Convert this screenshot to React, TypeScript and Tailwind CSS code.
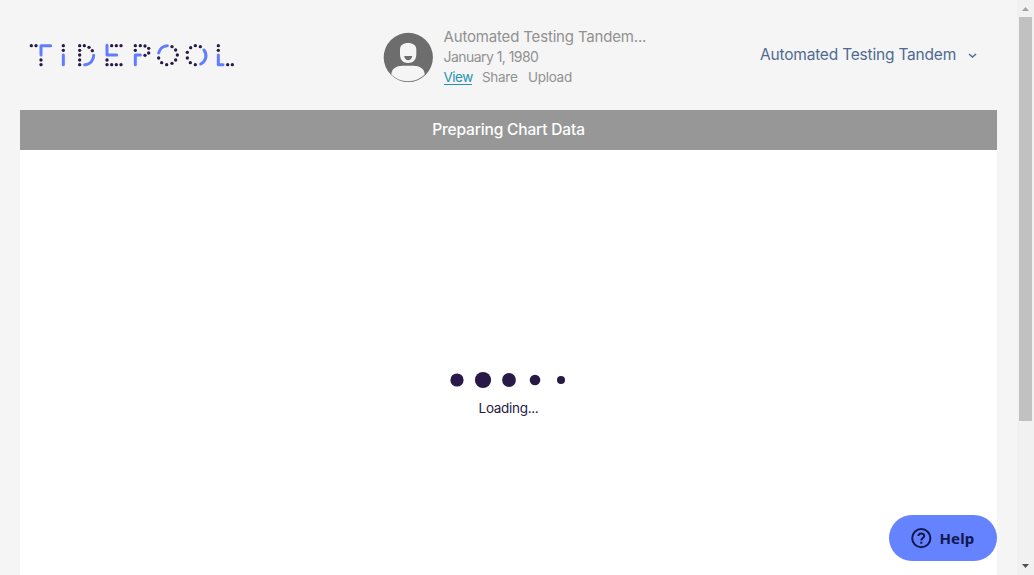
import React from "react";

type Point = [number, number];

const leftDots: Point[] = [
  [34, 47], [48, 47], [63, 90], [63, 104],
  [130, 47], [130, 61],
  [179, 47], [193, 47], [207, 52], [217, 62], [179, 61], [179, 75], [179, 90], [179, 104],
  [275, 47], [289, 47], [303, 47], [261, 90], [261, 104], [275, 104], [289, 104], [303, 104],
];

const rightDots: Point[] = [
  [31, 47], [46, 47], [60, 48], [71, 55], [71, 69], [60, 76], [31, 61],
  [141, 50], [152, 60], [157, 75], [152, 90], [141, 100], [125, 104], [110, 98], [101, 84],
  [211, 47], [197, 53], [187, 67], [187, 84], [196, 98], [211, 104], [226, 50],
  [280, 47], [280, 61], [308, 104], [322, 104],
];

function Dots({ points }: { points: Point[] }) {
  return (
    <g fill="#281946" stroke="none">
      {points.map(([x, y]) => (
        <circle key={`${x}-${y}`} cx={x} cy={y} r={5} />
      ))}
    </g>
  );
}

function Logo() {
  return (
    <svg className="block h-[30px] w-[210px]" viewBox="0 0 630 90" fill="none" stroke="#627cff" strokeWidth="9" strokeLinecap="round" strokeLinejoin="round" aria-label="Tidepool">
      <g transform="translate(-15 -30)">
        <path d="M92 47H63V75M130 75V104M221 76C221 92 210 104 194 104M261 46V75H290" />
        <Dots points={leftDots} />
      </g>
      <g transform="translate(300 -30)">
        <path d="M46 75H31V104M101 69C104 57 114 47 127 47M237 60C248 75 243 94 227 102M280 75V104H294" />
        <Dots points={rightDots} />
      </g>
    </svg>
  );
}

function Avatar() {
  return (
    <svg className="block size-[50px] shrink-0" viewBox="0 0 50 50">
      <circle cx="25.300" cy="25.400" r="24.600" fill="#6d6d6d" />
      <path d="M17 17.500C17 13.200 20 11 25 11s8.300 2.200 8.300 6.500v5c0 5-3.300 8.500-8.300 8.500S17 27.500 17 22.500Z" fill="#f5f5f5" />
      <path d="M21.200 24h8c-.4 2.700-1.800 4.200-4 4.200s-3.600-1.500-4-4.200Z" fill="#6d6d6d" />
      <path d="M8.300 42.500c0-5.800 5.200-8.700 11.200-8.700h11c6 0 11.200 2.900 11.200 8.700C37.500 46.800 31.500 49.200 25 49.200S12.500 46.800 8.300 42.500Z" fill="#f5f5f5" />
    </svg>
  );
}

const loaderSizes = [13.2, 16.2, 13.8, 10.6, 8];

function Loader() {
  return (
    <svg className="h-5 w-[130px]" viewBox="0 0 130 20" fill="#281946">
      {loaderSizes.map((size, i) => (
        <circle key={i} cx={13 + i * 26} cy={10} r={size / 2} />
      ))}
    </svg>
  );
}

export default function App() {
  return (
    <div className="flex h-[575px] w-[1034px] overflow-hidden bg-[#f5f5f5] font-['Inter',sans-serif]">
      <div className="flex min-w-0 flex-1 flex-col pr-5 pl-5">
        <header className="flex h-[110px] shrink-0">
          <div className="w-[363px] shrink-0 pt-[40px] pl-[5px]">
            <Logo />
          </div>
          <div className="flex w-[377px] shrink-0 pt-[26px]">
            <div className="pt-[6px]">
              <Avatar />
            </div>
            <div className="pl-[10.500px] whitespace-nowrap text-[#919191]">
              <div className="h-[21px] text-[15px] leading-[22px] tracking-[-0.17px]">Automated Testing Tandem...</div>
              <div className="h-5 text-[14px] leading-5 tracking-[-0.55px]">January 1, 1980</div>
              <nav className="flex h-5 gap-[10px] text-[13.500px] leading-5">
                <a className="h-[18px] w-[28.500px] border-b border-[#2493ae] tracking-[-0.5px] text-[#2493ae]">View</a>
                <a className="w-[36px] tracking-[-0.3px]">Share</a>
                <a className="tracking-[-0.3px]">Upload</a>
              </nav>
            </div>
          </div>
          <div className="flex h-[109px] items-center gap-[11.500px] whitespace-nowrap text-[#4f6a92]">
            <span className="text-[15.500px] tracking-[-0.2px]">Automated Testing Tandem</span>
            <svg className="mt-px size-[9px]" viewBox="0 0 9 9" fill="none" stroke="currentColor" strokeWidth="1.500">
              <path d="m1 3 3.500 3L8 3" />
            </svg>
          </div>
        </header>
        <main className="flex min-h-0 flex-1 flex-col bg-white">
          <h1 className="flex h-10 shrink-0 items-center justify-center bg-[#979797] pb-px text-[15.500px] font-medium tracking-[-0.15px] text-white">Preparing Chart Data</h1>
          <div className="flex flex-col items-center pt-[220px]">
            <Loader />
            <div className="pt-2 text-[13.500px] leading-5 tracking-[-0.3px] text-[#281946]">Loading...</div>
          </div>
        </main>
      </div>
      <div className="flex w-[17px] shrink-0 flex-col items-center bg-[#f1f1f1]">
        <svg className="h-[17px] w-[17px] shrink-0" viewBox="0 0 17 17" fill="#a3a3a3"><path d="M5 11h7L8.500 7Z" /></svg>
        <div className="h-[404px] w-[13px] bg-[#c1c1c1]" />
        <svg className="mt-auto h-[17px] w-[17px] shrink-0" viewBox="0 0 17 17" fill="#505050"><path d="M5 6h7l-3.500 4Z" /></svg>
      </div>
      <button className="absolute top-[515px] left-[889px] flex h-[46px] w-[108px] items-center gap-2 rounded-full bg-[#6582ff] pl-[21.500px] text-[#12184f]">
        <svg className="size-[21px]" viewBox="0 0 21 21" fill="none" stroke="currentColor" strokeWidth="2">
          <circle cx="10.300" cy="10.200" r="9.100" />
          <path d="M7.400 8.100C7.400 6.400 8.600 5.400 10.300 5.400s2.900 1.100 2.900 2.600c0 2-2.900 2.200-2.900 4.500M10.300 13.700v2" />
        </svg>
        <span className="font-['Noto_Sans',sans-serif] text-[15px] font-bold tracking-[0.1px]">Help</span>
      </button>
    </div>
  );
}
